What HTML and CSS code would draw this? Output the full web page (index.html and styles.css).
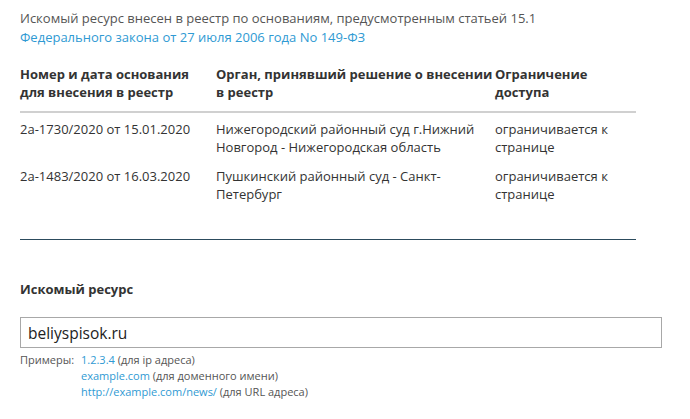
FILE: index.html
```html
<!DOCTYPE html>
<html lang="ru">
<head>
    <meta charset="UTF-8">
    <title>Проверка ресурса</title>
    <link rel="stylesheet" href="styles.css">
</head>
<body>

<div class="page">
    <p class="intro">
        Искомый ресурс внесен в реестр по основаниям, предусмотренным статьей 15.1<br>
        <a href="#">Федерального закона от 27 июля 2006 года No 149-ФЗ</a>
    </p>

    <table class="registry">
        <thead>
            <tr>
                <th class="col-num">Номер и дата основания для внесения в реестр</th>
                <th class="col-org">Орган, принявший решение о внесении в реестр</th>
                <th class="col-limit">Ограничение доступа</th>
            </tr>
        </thead>
        <tbody>
            <tr>
                <td>2а-1730/2020 от 15.01.2020</td>
                <td>Нижегородский районный суд г.Нижний Новгород - Нижегородская область</td>
                <td>ограничивается к странице</td>
            </tr>
            <tr>
                <td>2а-1483/2020 от 16.03.2020</td>
                <td>Пушкинский районный суд - Санкт-Петербург</td>
                <td>ограничивается к странице</td>
            </tr>
        </tbody>
    </table>

    <hr class="divider">

    <!-- Search form -->
    <form class="search">
        <label class="search-label" for="resource">Искомый ресурс</label>
        <input type="text" id="resource" class="search-input" value="beliyspisok.ru">
        <div class="examples">
            <span class="examples-title">Примеры:</span>
            <ul class="examples-list">
                <li><a href="#">1.2.3.4</a> (для ip адреса)</li>
                <li><a href="#">example.com</a> (для доменного имени)</li>
                <li><a href="#">http://example.com/news/</a> (для URL адреса)</li>
            </ul>
        </div>
    </form>
</div>

</body>
</html>
```

FILE: styles.css
```css
body {
    margin: 0;
    background-color: #fff;
    font-family: "Open Sans", Arial, sans-serif;
    color: #333;
}
a {
    color: #2f9ad3;
    text-decoration: none;
}
.page {
    width: 616px;
    padding: 9px 20px 0;
}
.intro {
    margin: 0;
    font-size: 13px;
    line-height: 19px;
    color: #555;
}
.registry {
    width: 616px;
    margin-top: 18px;
    border-collapse: collapse;
    font-size: 13px;
    line-height: 18px;
}
.registry th {
    text-align: left;
    font-weight: bold;
    padding: 0 0 10px;
    border-bottom: 2px solid #d0d0d0;
    vertical-align: top;
}
.registry td {
    padding: 7px 0 5px;
    vertical-align: top;
}
.registry tbody tr + tr td {
    padding-top: 6px;
}
.col-num {
    width: 196px;
}
.col-org {
    width: 279px;
}
.divider {
    margin: 31px 0 0;
    border: 0;
    border-top: 1px solid #2c4b5d;
}
.search {
    margin-top: 40px;
}
.search-label {
    display: block;
    font-size: 13px;
    font-weight: bold;
    line-height: 18px;
}
.search-input {
    display: block;
    box-sizing: border-box;
    width: 642px;
    height: 31px;
    margin-top: 19px;
    padding: 0 7px;
    border: 1px solid #a8a8a8;
    font-family: "Open Sans", Arial, sans-serif;
    font-size: 15.5px;
    color: #222;
}
.examples {
    display: flex;
    margin-top: 4px;
    font-size: 11px;
    line-height: 16px;
    color: #555;
}
.examples-title {
    width: 61px;
}
.examples-list {
    list-style: none;
    margin: 0;
    padding: 0;
}
```
